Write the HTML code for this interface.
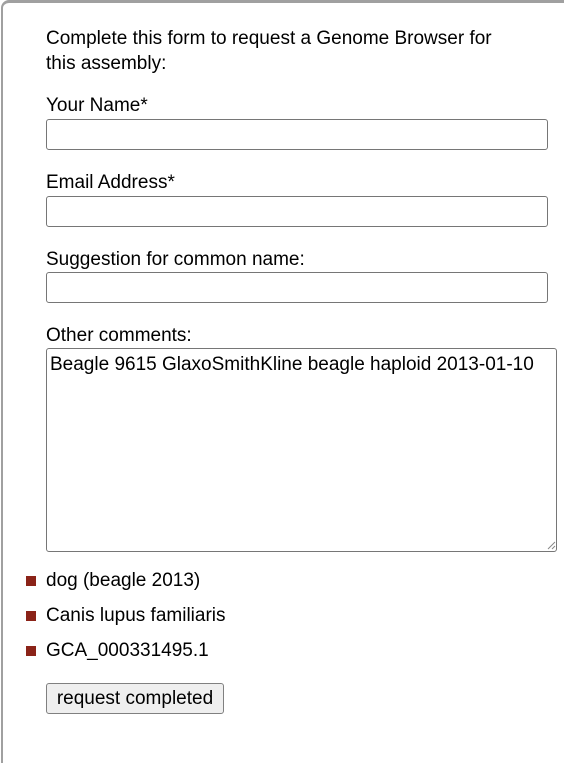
<!DOCTYPE html>
<html><head><style>
html,body{margin:0;padding:0;width:564px;height:722px;overflow:hidden;background:#fff;font-family:"Liberation Sans",Arial,sans-serif;color:#000;}
.panel{position:absolute;left:1px;top:0;width:580px;height:760px;border-top:3px solid #a0a0a0;border-left:2px solid #a0a0a0;border-top-left-radius:8px;}
.t{position:absolute;font-size:19px;white-space:nowrap;}
.in{position:absolute;left:46px;width:500px;height:29px;border:1px solid #767676;border-radius:3px;background:#fff;}
.ta{position:absolute;left:46px;top:348px;width:509px;height:202px;border:1px solid #767676;border-radius:3px;background:#fff;}
.sq{position:absolute;left:26px;width:10px;height:10px;background:#8b2318;}
.btn{position:absolute;left:46px;top:683px;width:176px;height:29px;border:1px solid #808080;border-radius:3px;background:#efefef;font-size:19px;text-align:center;line-height:29px;}
</style></head><body>
<div class="panel"></div>
<div class="t" style="left:46px;top:26px;line-height:25px;">Complete this form to request a Genome Browser for<br>this assembly:</div>
<div class="t" style="left:46px;top:95px;">Your Name*</div>
<div class="in" style="top:119px;"></div>
<div class="t" style="left:46px;top:172px;">Email Address*</div>
<div class="in" style="top:196px;"></div>
<div class="t" style="left:46px;top:249px;">Suggestion for common name:</div>
<div class="in" style="top:272px;"></div>
<div class="t" style="left:46px;top:325px;">Other comments:</div>
<div class="ta"></div>
<div class="t" style="left:50px;top:354px;">Beagle 9615 GlaxoSmithKline beagle haploid 2013-01-10</div>
<svg style="position:absolute;left:546px;top:540px" width="10" height="10"><path d="M2 9L9 2M6 9L9 6" stroke="#888" stroke-width="1"/></svg>
<div class="sq" style="top:576px"></div><div class="t" style="left:46px;top:570px;">dog (beagle 2013)</div>
<div class="sq" style="top:611px"></div><div class="t" style="left:46px;top:605px;">Canis lupus familiaris</div>
<div class="sq" style="top:646px"></div><div class="t" style="left:46px;top:640px;">GCA_000331495.1</div>
<div class="btn">request completed</div>
</body></html>
